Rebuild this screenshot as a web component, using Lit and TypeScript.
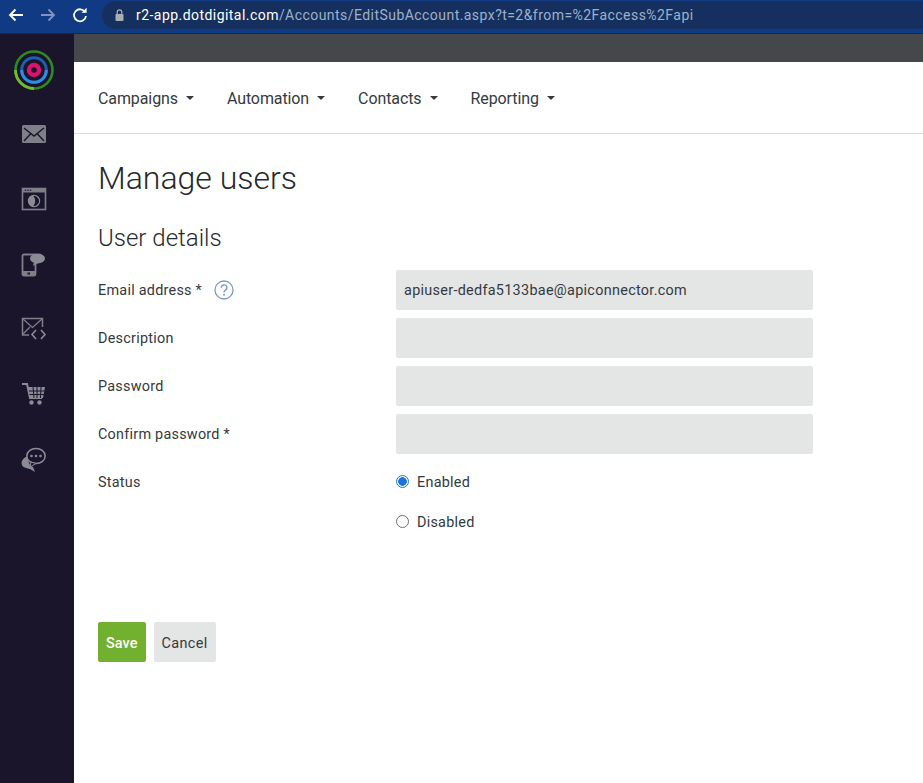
import { LitElement, html, css, svg } from "lit";
import { customElement } from "lit/decorators.js";

const nav = ["Campaigns", "Automation", "Contacts", "Reporting"];

const sideIcons = [
  svg`<rect x="1" y="3" width="24" height="18" rx="1.5" fill="#7f7f89"/><path d="M3 6 L13 14 L23 6 M3 19 L10 11.5 M23 19 L16 11.5" fill="none" stroke="#1a152b" stroke-width="1.4"/>`,
  svg`<rect x="1.5" y="1.5" width="23" height="21" fill="none" stroke="#7f7f8a" stroke-width="1.6"/><rect x="1.5" y="1" width="23" height="4.5" fill="#7f7f8a"/><circle cx="4.5" cy="3.2" r="0.8" fill="#1a152b"/><circle cx="7" cy="3.2" r="0.8" fill="#1a152b"/><circle cx="9.5" cy="3.2" r="0.8" fill="#1a152b"/><circle cx="13" cy="14" r="6.2" fill="#8b8b95"/><path d="M13 9.4 A4.6 4.6 0 0 1 13 18.6 A7 7 0 0 0 13 9.4 Z" fill="#1a152b" stroke="#1a152b" stroke-width="1"/>`,
  svg`<rect x="1.5" y="2.5" width="13" height="21" rx="1.5" fill="none" stroke="#7f7f8a" stroke-width="1.8"/><rect x="1" y="19" width="14" height="5" rx="1.5" fill="#7f7f8a"/><rect x="6.5" y="20.5" width="2.5" height="2" fill="#1a152b"/><ellipse cx="16.5" cy="6.5" rx="7.5" ry="5" fill="#8b8b95"/><path d="M13 10 L12 14 L17 11 Z" fill="#8b8b95"/>`,
  svg`<path d="M8 18 H1.5 V1.5 H21.5 V10" fill="none" stroke="#7f7f8a" stroke-width="1.5"/><path d="M2 2 L11.5 10.5 L21 2 M2 17 L9 10" fill="none" stroke="#7f7f8a" stroke-width="1.3"/><path d="M15 13 L11 17.5 L15 22 M20 13 L24 17.5 L20 22" fill="none" stroke="#8b8b95" stroke-width="1.6"/>`,
  svg`<path d="M1 2 H6 L9 16 H21" fill="none" stroke="#8b8b95" stroke-width="2"/><path d="M7 5 H24 L22 16 H9 Z" fill="#8b8b95"/><path d="M12 5 L13 16 M16 5 V16 M20 5 L19.5 16 M8 9 H23.5 M8.5 12.5 H23" stroke="#1a152b" stroke-width="1"/><circle cx="10.5" cy="20.5" r="2.2" fill="#8b8b95"/><circle cx="18.5" cy="20.5" r="2.2" fill="#8b8b95"/>`,
  svg`<path d="M7 9 C2 11 -0.5 14 1 18 C2 21 6 21 9 22 L14 25 L12 20 C9 19 7 16 7 9 Z" fill="#8b8b95"/><ellipse cx="15" cy="9" rx="9.2" ry="7.6" fill="#1a152b" stroke="#8b8b95" stroke-width="1.5"/><path d="M10 15 L9 20 L15 16.5 Z" fill="#1a152b" stroke="#8b8b95" stroke-width="1"/><circle cx="10.5" cy="9" r="1.3" fill="#8b8b95"/><circle cx="15" cy="9" r="1.3" fill="#8b8b95"/><circle cx="19.5" cy="9" r="1.3" fill="#8b8b95"/>`,
];

@customElement("app-root")
export class AppRoot extends LitElement {
  static styles = css`
    :host { display: block; height: 783px; overflow: hidden; background: #fff; font-family: Roboto, "Liberation Sans", sans-serif; color: #343a40; }
    .chrome { height: 33px; background: #103b84; border-bottom: 1px solid #12294f; display: flex; align-items: flex-start; box-sizing: content-box; }
    .btns { width: 102px; flex: none; height: 30px; display: flex; align-items: center; padding-left: 8px; gap: 16px; box-sizing: border-box; }
    .btns svg { display: block; flex: none; }
    .url { flex: 1; height: 28px; margin-top: 1px; background: #15305f; border-radius: 14px 0 0 14px; display: flex; align-items: center; padding-left: 13px; font: 14px/28px Roboto, "Liberation Sans", sans-serif; letter-spacing: 0.45px; white-space: nowrap; color: #9fb0c9; }
    .url svg { margin-right: 12px; flex: none; }
    .url b { font-weight: 400; color: #fff; }
    .body { display: flex; height: 749px; }
    .side { width: 74px; flex: none; background: #1a152b; display: flex; flex-direction: column; align-items: center; }
    .logo { margin: 16px 0 0 -6px; display: block; }
    .ico { display: block; }
    .icons { display: flex; flex-direction: column; gap: 39px; margin-top: 32px; margin-left: -6px; }
    .main { flex: 1; min-width: 0; }
    .strip { height: 28px; background: #45484a; }
    .nav { border-bottom: 1px solid #dcdcdc; display: flex; align-items: center; padding: 2px 0 0 24px; box-sizing: border-box; height: 72px; gap: 33px; font-size: 16px; letter-spacing: -0.1px; }
    .nav span { display: flex; align-items: center; }
    .nav i { display: block; width: 0; height: 0; margin-left: 8px; margin-top: -1px; border-left: 4px solid transparent; border-right: 4px solid transparent; border-top: 4px solid #343a40; }
    .content { padding: 0 24px; }
    h1 { margin: 0; padding-top: 24px; font-size: 32px; line-height: 40px; font-weight: 300; color: #262a2e; }
    h2 { margin: 0; padding-top: 25px; font-size: 24px; line-height: 30px; font-weight: 300; color: #262a2e; }
    .form { display: grid; grid-template-columns: 298px 417px; row-gap: 8px; margin-top: 17px; font-size: 14.4px; }
    .lab { display: flex; align-items: center; height: 40px; letter-spacing: 0.25px; }
    .help { margin-left: 12px; display: block; }
    .inp { background: #e4e5e5; border-radius: 2px; height: 40px; display: flex; align-items: center; padding-left: 8px; font-size: 14.4px; letter-spacing: 0.3px; }
    .radio-group { display: flex; flex-direction: column; }
    .radios { display: flex; align-items: center; height: 40px; gap: 8px; letter-spacing: 0.25px; }
    .radio { width: 11px; height: 11px; border: 1px solid #6f6f6f; border-radius: 50%; background: #fff; flex: none; margin-top: -1px; }
    .radio.on { border: 1px solid #1b74d8; background: radial-gradient(circle, #1b74d8 0 4px, #fff 4.6px); }
    .actions { display: flex; gap: 8px; margin-top: 80px; font-size: 14.4px; }
    .btn { height: 40px; display: flex; align-items: center; padding: 2px 8px 0; box-sizing: border-box; border-radius: 2px; background: #e4e5e5; letter-spacing: 0.4px; }
    .btn.save { background: #72b02f; color: #fff; font-weight: 500; letter-spacing: 0.1px; }
  `;

  render() {
    return html`
      <div class="chrome">
        <div class="btns">
          <svg width="16" height="14" viewBox="0 0 16 14"><path d="M15 7 H2 M7.5 1.5 L2 7 L7.5 12.5" fill="none" stroke="#fff" stroke-width="1.8"/></svg>
          <svg width="16" height="14" viewBox="0 0 16 14"><path d="M1 7 H14 M8.5 1.5 L14 7 L8.5 12.5" fill="none" stroke="#7f95bd" stroke-width="1.8"/></svg>
          <svg width="16" height="16" viewBox="0 0 16 16"><path d="M13.2 5.2 A6 6 0 1 0 14 9" fill="none" stroke="#fff" stroke-width="1.8"/><path d="M9.5 5.8 H14.6 V0.8 Z" fill="#fff"/></svg>
        </div>
        <div class="url">
          <svg width="9" height="12" viewBox="0 0 9 12"><rect x="0.5" y="5" width="8" height="7" rx="1" fill="#a9adb4"/><path d="M2.2 5 V3.2 A2.3 2.3 0 0 1 6.8 3.2 V5" fill="none" stroke="#a9adb4" stroke-width="1.2"/></svg>
          <span><b>r2-app.dotdigital.com</b>/Accounts/EditSubAccount.aspx?t=2&amp;from=%2Faccess%2Fapi</span>
        </div>
      </div>
      <div class="body">
        <div class="side">
          <svg class="logo" width="40" height="40" viewBox="0 0 40 40">
            <circle cx="20" cy="20" r="18.5" fill="none" stroke="#2e8a22" stroke-width="2.6"/>
            <path d="M1.5 20 A18.5 18.5 0 0 0 20 38.5" fill="none" stroke="#74bc2e" stroke-width="2.8"/>
            <circle cx="20" cy="20" r="12.3" fill="none" stroke="#1f5fae" stroke-width="3"/>
            <path d="M7.7 20 A12.3 12.3 0 0 0 32.3 20" fill="none" stroke="#2a8fe6" stroke-width="3"/>
            <circle cx="20" cy="20" r="5" fill="none" stroke="#d9136e" stroke-width="4.4"/>
          </svg>
          <div class="icons">
            ${sideIcons.map((i) => html`<svg class="ico" width="26" height="26" viewBox="0 0 26 26">${i}</svg>`)}
          </div>
        </div>
        <div class="main">
          <div class="strip"></div>
          <div class="nav">${nav.map((n) => html`<span>${n}<i></i></span>`)}</div>
          <div class="content">
            <h1>Manage users</h1>
            <h2>User details</h2>
            <div class="form">
              <div class="lab">Email address *
                <svg class="help" width="20" height="20" viewBox="0 0 20 20"><circle cx="10" cy="10" r="9" fill="none" stroke="#7b9bcb" stroke-width="1.3"/><path d="M7.3 7.8 A2.8 2.8 0 1 1 11.4 10.2 C10.4 10.8 10 11.2 10 12.4" fill="none" stroke="#7b9bcb" stroke-width="1.4"/><circle cx="10" cy="14.8" r="1" fill="#7b9bcb"/></svg>
              </div>
              <div class="inp">apiuser-dedfa5133bae@apiconnector.com</div>
              <div class="lab">Description</div><div class="inp"></div>
              <div class="lab">Password</div><div class="inp"></div>
              <div class="lab">Confirm password *</div><div class="inp"></div>
              <div class="lab">Status</div>
              <div class="radio-group">
                <div class="radios"><span class="radio on"></span>Enabled</div>
                <div class="radios"><span class="radio"></span>Disabled</div>
              </div>
            </div>
            <div class="actions">
              <div class="btn save">Save</div>
              <div class="btn">Cancel</div>
            </div>
          </div>
        </div>
      </div>
    `;
  }
}
